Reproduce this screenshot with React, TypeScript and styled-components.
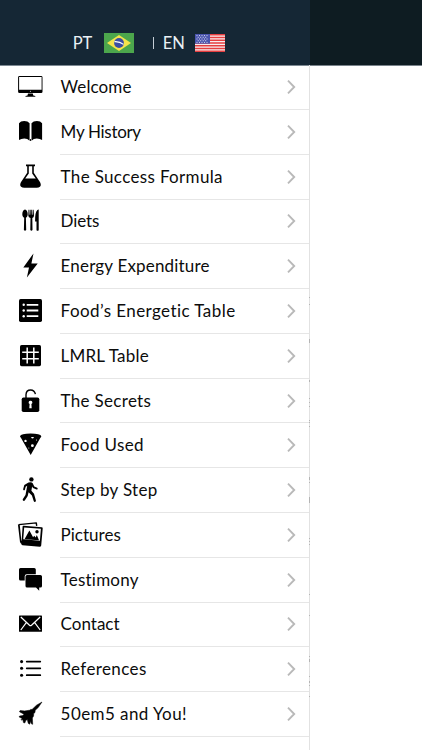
import React from 'react';
import styled, { createGlobalStyle } from 'styled-components';

const GlobalStyle = createGlobalStyle`
  * { box-sizing: border-box; }
  body { margin: 0; background: #fff; overflow: hidden; }
`;

const Screen = styled.div`
  display: grid;
  grid-template-columns: 310px 1fr;
  width: 422px;
  height: 750px;
  overflow: hidden;
  background: #fff;
  color: #0c0c0c;
  font-family: Lato, 'Liberation Sans', sans-serif;
  font-variant-ligatures: none;
`;

const Drawer = styled.aside`
  position: relative;
  height: 750px;
  overflow: hidden;
`;

const Header = styled.header`
  display: flex;
  align-items: center;
  height: 66px;
  padding: 21px 0 0 72.7px;
  background: #152735;
  border-bottom: 1px solid #7d8993;
`;

const PageBar = styled.div`
  height: 66px;
  background: #0e1c22;
  border-bottom: 1px solid #78828a;
`;

const Page = styled.main`
  height: 750px;
`;

const Language = styled.button<{ $gap: number }>`
  display: flex;
  align-items: center;
  gap: ${(p) => p.$gap}px;
  padding: 0;
  border: 0;
  background: none;
  color: #eaf0f5;
  font: inherit;
  font-size: 16.5px;
  line-height: 22px;
`;

const Separator = styled.span`
  width: 1px;
  height: 12px;
  margin: 0 9px 1px 19px;
  background: #c5ced6;
`;

const Menu = styled.nav`
  display: flex;
  flex-direction: column;
  height: 685px;
  margin-top: -0.8px;
  border-right: 1px solid #e2e2e2;
`;

const MenuItem = styled.a`
  display: grid;
  grid-template-columns: 60px 1fr;
  flex: 0 0 44.79px;
  height: 44.79px;
  color: inherit;
  text-decoration: none;
`;

const IconCell = styled.span`
  display: flex;
  align-items: center;
  padding: 0 0 1px 17px;
`;

const ItemBody = styled.span`
  display: flex;
  align-items: center;
  justify-content: space-between;
  padding: 0 12px 0 0.6px;
  border-bottom: 1px solid #e6e6e6;
`;

const Label = styled.span<{ $tracking: number }>`
  font-size: 17px;
  line-height: 22px;
  letter-spacing: ${(p) => p.$tracking}px;
  white-space: nowrap;
`;

const Glyph = styled.svg`
  display: block;
  width: 26px;
  height: 26px;
  overflow: visible;
`;

const Edge = styled.svg`
  position: absolute;
  top: 0;
  right: 0;
`;

const icons: Record<string, React.ReactNode> = {
  monitor: (
    <>
      <path fillRule="evenodd" d="M2 2h21.6q1.4 0 1.4 1.3v14.4q0 1.3-1.4 1.3H2Q.6 19 .6 17.700V3.300Q.6 2 2 2Zm-.4 1V15.700h22.500V3Z" />
      <path d="M10.500 19.500h4.800l.5 1.900 2 .6v.8H8v-.8l2-.6Z" />
      <circle cx="12.900" cy="17.300" r=".5" fill="#fff" />
    </>
  ),
  book: <path d="M1.500 4.200Q3 2 6.700 2t5.400 2.200v17.500Q10 19.400 6.800 19.400q-3.200 0-5.300 1.600ZM24.600 4.200Q23.100 2 19.400 2T14 4.200v17.500q2.100-2.300 5.300-2.300t5.300 1.600ZM12.600 20h.9v2h-.9Z" />,
  flask: (
    <path fillRule="evenodd" d="M8.500.6h9v1.600h-1.200v6.600l6.300 9.400q1.500 3-.2 4.500-1.100 1.100-3.200 1.100H6.800q-2.100 0-3.200-1.100-1.700-1.500-.2-4.500l6.300-9.400V2.200H8.500Zm2.800 1.600v7.200L7.700 14.500h10.600l-3.600-5.100V2.200Z" />
  ),
  cutlery: (
    <>
      <path d="M7.500 1.500c1.600 0 2.700 2.400 2.700 4.700 0 2-.8 3-1.800 3.600l.3 12.200q-1.200 1.400-2.300 0l.3-12.200C5.600 9.200 4.800 8.200 4.800 6.200c0-2.300 1.100-4.700 2.700-4.700Z" />
      <path d="M11 1.800h.9l.2 5h.6l.2-5h1.300l.2 5h.6l.2-5h.9l.4 6q-.2 1.700-1.700 2.300l.2 12q-1.100 1.300-2.200 0l.2-12Q11 9.500 10.800 7.800Z" />
      <path d="M21.200 1.500v20.700q-1.100 1.300-2.200 0v-8.700h-1.400q-.2-9.600 2.300-11.600.6-.5 1.300-.4Z" />
    </>
  ),
  bolt: <path d="M16 .4 5.800 14.500h5.700L9.400 24.400 20.200 10.400h-6.300Z" />,
  list: (
    <>
      <rect x="1.500" y="1.100" width="23" height="22.800" rx="1.600" />
      <g fill="#fff">
        <circle cx="6.200" cy="6.800" r="1.200" /><circle cx="6.200" cy="12.500" r="1.200" /><circle cx="6.200" cy="18.200" r="1.200" />
        <path d="M9.200 5.900h11.600v1.800H9.200ZM9.200 11.600h11.600v1.800H9.200ZM9.200 17.300h11.600v1.800H9.200Z" />
      </g>
    </>
  ),
  grid: (
    <>
      <rect x="2.500" y="2" width="21" height="21.200" rx="1.600" />
      <path d="M9.700 4.500v16M16.300 4.500v16M4.700 9.200h16.600M4.700 15.800h16.600" stroke="#fff" strokeWidth="1.500" />
    </>
  ),
  lock: (
    <>
      <rect x="4.200" y="9.400" width="17.600" height="14.700" rx="1.800" />
      <path d="M8.500 10V6.800Q8.700 2 13.100 2q3.900 0 4.800 4.200" fill="none" stroke="#000" strokeWidth="1.400" />
      <path d="M13 12.700a1.800 1.800 0 0 1 .9 3.400l.3 4.200h-2.400l.3-4.200a1.800 1.800 0 0 1 .9-3.400Z" fill="#fff" />
    </>
  ),
  pizza: (
    <>
      <path d="M2.500 4.200Q3.400 1.700 13.100 1.600q9.900.1 10.700 2.600-.2 1-.9 1.500L13.200 23.100 3.400 5.700q-.8-.6-.9-1.500Z" />
      <g fill="#fff">
        <path d="M13.800 5h2.400v1q-1.200.9-2.400 0Z" /><circle cx="8" cy="8.900" r="1.200" /><circle cx="14.900" cy="13.700" r="1.400" /><circle cx="19" cy="8" r=".5" /><circle cx="11.300" cy="16" r=".5" />
      </g>
    </>
  ),
  walk: (
    <>
      <circle cx="13.900" cy="2.400" r="2.200" />
      <path d="M11 5.400Q14.300 4.600 15.200 6.200l1.600 3.300 2.900 1.300q.9.600.3 1.500-.4.500-1 .2l-3.500-1.600-.9-1.400-.7 4.300 2.600 3 1.900 6.600q.1 1.300-1 1.500-.9 0-1.200-.9l-1.800-5.500-3.300-3.200-.9 3.800-2.900 4.300q-.9.900-1.800.1-.6-.6-.1-1.500l2.600-4 1.700-9.200-1.500.9-.9 3.200q-.5.700-1.200.3-.6-.4-.4-1.200l1.100-4Z" />
    </>
  ),
  photos: (
    <>
      <path d="M1.200 2.600 18.800.9l.4 3" fill="none" stroke="#000" strokeWidth="1.400" strokeLinejoin="round" />
      <path d="M.4 2.200 2.500 20q.4 1.700 2 2l.3-3.200-1-.2L2.300 3.200Z" />
      <path fillRule="evenodd" d="m6 3.700 18.200 1.500q1.100.1 1 1.200l-1.500 17.200q-.1 1.200-1.300 1.100L5 23.200q-1.200-.1-1.100-1.200L5.100 4.600q.1-1 .9-.9Zm.7 1.700L5.700 17.300l16.700 1.400 1-11.900Z" />
      <path d="m7 17.200 4.900-8.700 3.700 6.700 1.100-1.400 1.500 1.600 1.100-2.300 2.200 5.100Z" /><circle cx="19.500" cy="9.800" r="1.700" />
    </>
  ),
  chat: (
    <>
      <path d="M3 .9h13.700q1.600 0 1.600 1.600v4.700H9.200Q7.200 7.300 7.200 9.200v4.300H3q-1.500 0-1.500-1.500V2.500Q1.500.9 3 .9Z" />
      <path d="M9.600 7.900h13.300q1.600 0 1.600 1.600V19q0 1.500-1.600 1.500h-1.200v3.300l-3.200-3.300H9.600Q8 20.500 8 19V9.500q0-1.600 1.600-1.600Z" />
    </>
  ),
  mail: (
    <>
      <rect x="1.500" y="4.600" width="23" height="16.200" rx=".6" />
      <path d="M3.300 6 12 14.300q1 .8 2 0L22.700 6M3.300 19l5.500-7.300M22.700 19l-5.500-7.300" fill="none" stroke="#fff" strokeWidth="1.200" />
    </>
  ),
  bullets: (
    <>
      <circle cx="4.100" cy="5.600" r="1.550" /><circle cx="4.100" cy="12.300" r="1.550" /><circle cx="4.100" cy="19.200" r="1.550" />
      <path d="M9.200 5.600h13.600M9.200 12.300h13.600M9.200 19.200h13.600" stroke="#000" strokeWidth="1.700" strokeLinecap="round" />
    </>
  ),
  jet: (
    <path stroke="#000" strokeWidth=".5" strokeLinejoin="round" d="M24.500 1 19 4.200l-4.500 4.300-1.300-.2-.2.8-5.900.8-4.400-.4-.8 1.200 4.600 2.500-1.200 1.300-3.200.5-.5.9 3 1.600-.9 1 .5.8 1.200-.8.500 3.100 1.400.4 1-2.600 1.500-.9.900 3.700 1.100 1 .8-.7.200-2.200 1.400 2.800 1 .2-.3-6.400 1.200-1.800.1-2.500 1.300-1.100.2-2.200L20.700 6.600Z" />
  ),
};

const items: { icon: string; text: string; tracking: number }[] = [
  { icon: 'monitor', text: 'Welcome', tracking: 0.1 },
  { icon: 'book', text: 'My History', tracking: -0.3 },
  { icon: 'flask', text: 'The Success Formula', tracking: 0.34 },
  { icon: 'cutlery', text: 'Diets', tracking: -0.1 },
  { icon: 'bolt', text: 'Energy Expenditure', tracking: 0.18 },
  { icon: 'list', text: 'Food’s Energetic Table', tracking: 0.43 },
  { icon: 'grid', text: 'LMRL Table', tracking: 0.2 },
  { icon: 'lock', text: 'The Secrets', tracking: 0.31 },
  { icon: 'pizza', text: 'Food Used', tracking: 0.38 },
  { icon: 'walk', text: 'Step by Step', tracking: 0.32 },
  { icon: 'photos', text: 'Pictures', tracking: 0.02 },
  { icon: 'chat', text: 'Testimony', tracking: 0.22 },
  { icon: 'mail', text: 'Contact', tracking: 0 },
  { icon: 'bullets', text: 'References', tracking: 0.38 },
  { icon: 'jet', text: '50em5 and You!', tracking: 0.43 },
];

/* Slivers of the page's text that show at the drawer's edge: [top, height]. */
const slivers = [
  [297, 1], [304, 1], [339, 4], [380, 2], [398, 1], [402, 1], [406, 1], [420, 1], [422, 1], [426, 1],
  [477, 3], [482, 1], [497, 6], [538, 1], [541, 1], [544, 1], [594, 1], [615, 1], [656, 1],
  [659, 3], [676, 1], [681, 2], [685, 1], [696, 1],
];

const BrazilFlag = () => (
  <svg width="30" height="20" viewBox="0 0 30 20">
    <path fill="#4ca64c" d="M0 0h30v20H0z" />
    <path fill="#f5e34b" d="M15 2 27 10 15 18 3 10z" />
    <circle cx="15" cy="10" r="4.900" fill="#3c4da2" />
    <path d="M10.500 8.700q5-.4 9 2.700" fill="none" stroke="#fff" strokeWidth="1.200" />
  </svg>
);

const UsaFlag = () => (
  <svg width="30" height="18" viewBox="0 0 30 18">
    <path fill="#f7eef0" d="M0 0h30v18H0z" />
    <path stroke="#e63e3f" strokeWidth="1.500" d="M0 .7h30M0 3.460h30M0 6.230h30M0 9h30M0 11.770h30M0 14.540h30M0 17.300h30" />
    <path fill="#4a55ae" d="M0 0h15v9.700H0z" />
    <path
      stroke="#e6e8f6" strokeWidth=".9" strokeDasharray="1 1.500"
      d="M1.500 1.600h12.500M2.700 3.300h10M1.500 5h12.500M2.700 6.700h10M1.500 8.400h12.500"
    />
  </svg>
);

const Chevron = () => (
  <svg width="10" height="16" viewBox="0 0 10 16">
    <path d="M1 1.700 7.200 8 1 14.300" fill="none" stroke="#b9b9b9" strokeWidth="1.900" />
  </svg>
);

export default function App() {
  return (
    <>
      <GlobalStyle />
      <Screen>
        <Drawer>
          <Header>
            <Language $gap={11.3}>PT<BrazilFlag /></Language>
            <Separator />
            <Language $gap={10}>EN<UsaFlag /></Language>
          </Header>
          <Menu>
            {items.map((item) => (
              <MenuItem key={item.text}>
                <IconCell><Glyph viewBox="-0.5 0 26 26">{icons[item.icon]}</Glyph></IconCell>
                <ItemBody>
                  <Label $tracking={item.tracking}>{item.text}</Label>
                  <Chevron />
                </ItemBody>
              </MenuItem>
            ))}
          </Menu>
          <Edge width="1" height="750">
            {slivers.map(([y, h]) => <rect key={y} y={y} width="1" height={h} fill="#b4b4b4" />)}
          </Edge>
        </Drawer>
        <Page><PageBar /></Page>
      </Screen>
    </>
  );
}
